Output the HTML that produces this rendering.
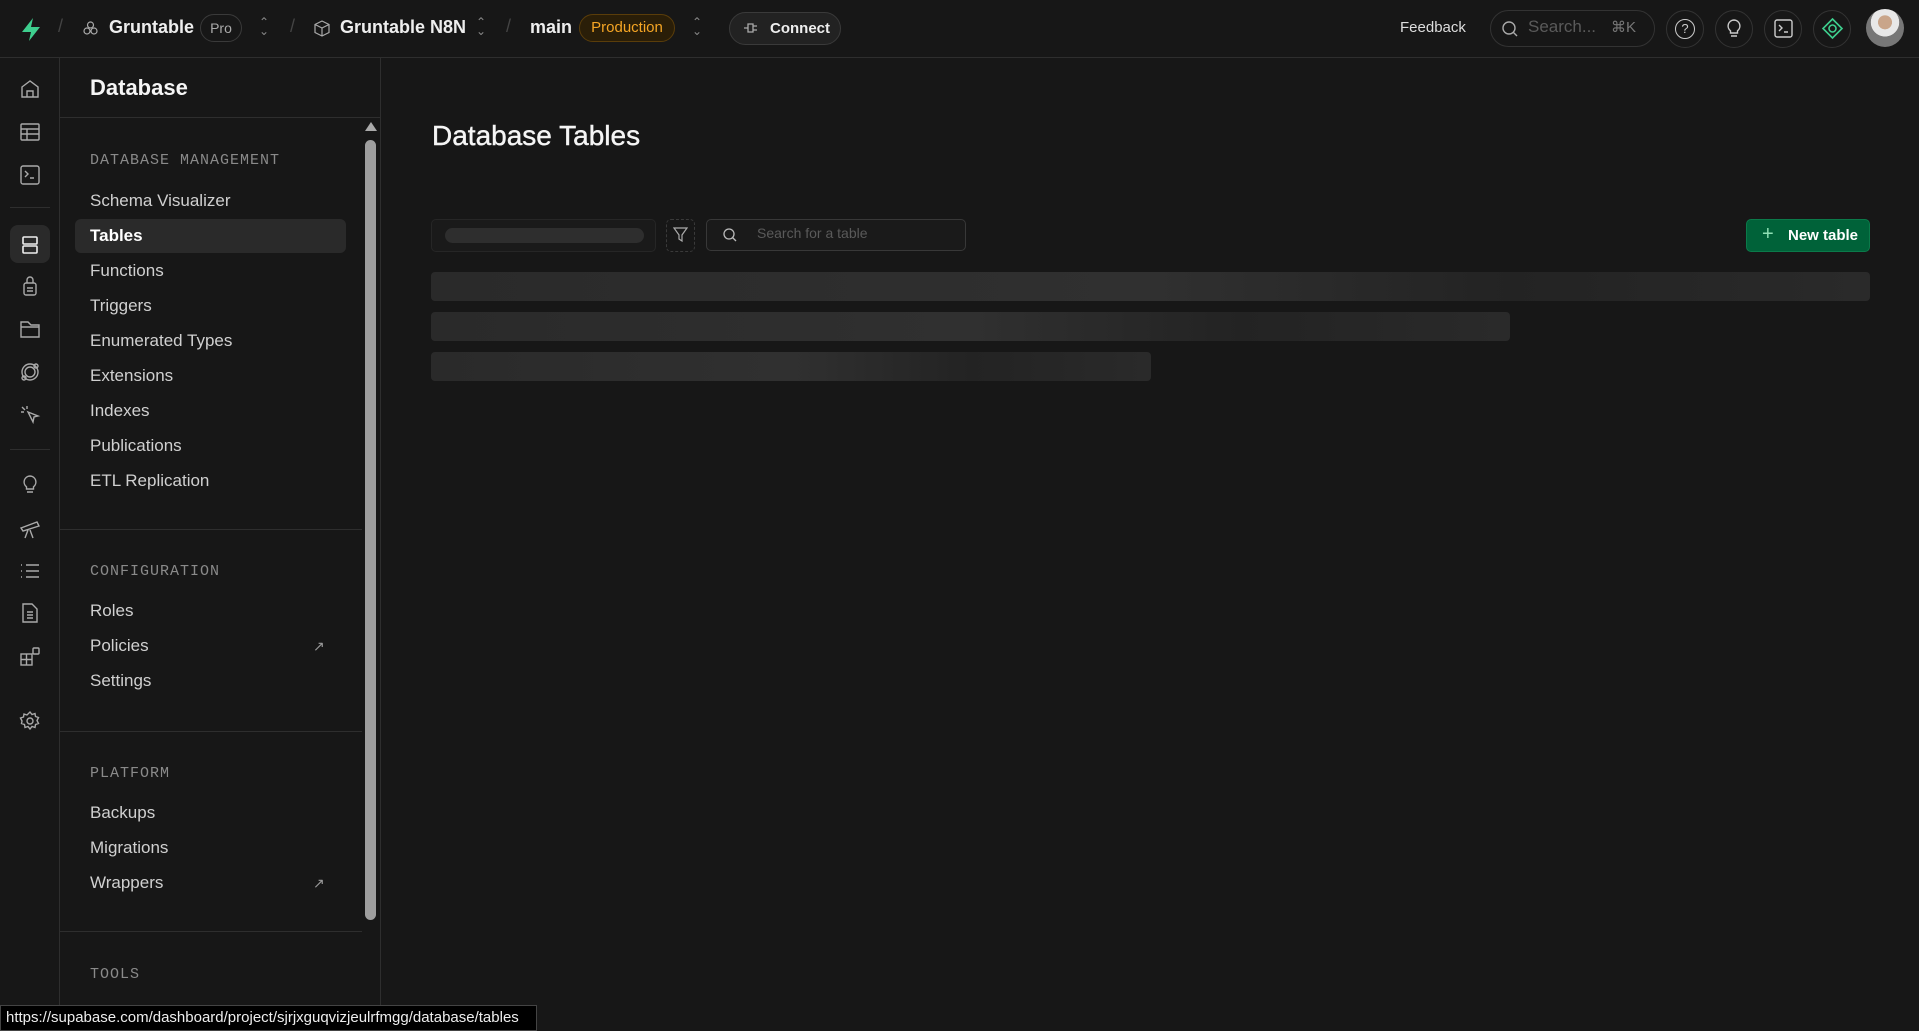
<!DOCTYPE html>
<html><head><meta charset="utf-8"><style>
*{box-sizing:border-box;margin:0;padding:0}
body{width:1919px;height:1031px;background:#171717;font-family:"Liberation Sans",sans-serif;color:#ededed;position:relative;overflow:hidden}
.a{position:absolute}
.top{left:0;top:0;width:1919px;height:58px;border-bottom:1px solid #2e2e2e}
.rail{left:0;top:58px;width:60px;height:973px;border-right:1px solid #2e2e2e}
.side{left:60px;top:58px;width:321px;height:973px;border-right:1px solid #2e2e2e}
.ico{position:absolute;left:19px;width:22px;height:22px}
.item{position:absolute;left:90px;font-size:17px;color:#d0d0d0}
.sec{position:absolute;left:90px;font-family:"Liberation Mono",monospace;font-size:15px;color:#8a8a8a;letter-spacing:1px}
.div{position:absolute;left:60px;width:302px;height:1px;background:#2e2e2e}
.ext{position:absolute;left:313px;color:#999;font-size:14px}
.circ{position:absolute;top:10px;width:38px;height:38px;border:1px solid #333;border-radius:50%}
.sk{position:absolute;left:431px;height:29px;border-radius:4px;background:linear-gradient(90deg,#2a2a2a,#303030 50%,#232323 75%,#2a2a2a)}
.chev{position:absolute;top:18px;color:#888;font-size:12px;line-height:9px}
</style></head><body>
<div class="a top">
  <svg class="a" style="left:19px;top:17px" width="24" height="25" viewBox="0 0 24 25"><path d="M14 1 L3 15 H12 L10 24 L21 10 H12 Z" fill="#3ecf8e"/></svg>
  <div class="a" style="left:58px;top:16px;color:#444;font-size:18px">/</div>
  <svg class="a" style="left:82px;top:20px" width="17" height="17" viewBox="0 0 17 17" fill="none" stroke="#aaa" stroke-width="1.2"><circle cx="8.5" cy="5" r="3"/><circle cx="5" cy="11" r="3"/><circle cx="12" cy="11" r="3"/></svg>
  <div class="a" style="left:109px;top:17px;font-size:18px;font-weight:bold;color:#eee">Gruntable</div>
  <div class="a" style="left:200px;top:14px;width:42px;height:28px;border:1px solid #3a3a3a;border-radius:14px;font-size:14px;color:#aaa;text-align:center;line-height:26px">Pro</div>
  <div class="chev" style="left:259px">⌃<br>⌄</div>
  <div class="a" style="left:290px;top:16px;color:#444;font-size:18px">/</div>
  <svg class="a" style="left:314px;top:20px" width="16" height="17" viewBox="0 0 16 17" fill="none" stroke="#aaa" stroke-width="1.2"><path d="M8 1 L15 4.5 V12.5 L8 16 L1 12.5 V4.5 Z M1 4.5 L8 8 L15 4.5 M8 8 V16"/></svg>
  <div class="a" style="left:340px;top:17px;font-size:18px;font-weight:bold;color:#eee">Gruntable N8N</div>
  <div class="chev" style="left:476px">⌃<br>⌄</div>
  <div class="a" style="left:506px;top:16px;color:#444;font-size:18px">/</div>
  <div class="a" style="left:530px;top:17px;font-size:18px;font-weight:bold;color:#eee">main</div>
  <div class="a" style="left:579px;top:14px;width:96px;height:28px;border:1px solid #5a3d0a;background:#2a1e08;border-radius:14px;font-size:15px;color:#f5a524;text-align:center;line-height:26px">Production</div>
  <div class="chev" style="left:692px">⌃<br>⌄</div>
  <div class="a" style="left:729px;top:12px;width:112px;height:33px;border:1px solid #3a3a3a;background:#222;border-radius:17px;font-size:15px;font-weight:bold;color:#eee;line-height:31px;padding-left:40px">Connect</div>
  <svg class="a" style="left:743px;top:21px" width="16" height="14" viewBox="0 0 16 14" fill="none" stroke="#aaa" stroke-width="1.3"><path d="M1 7H5 M5 3H10V11H5Z M10 5H14 M10 9H14"/></svg>
  <div class="a" style="left:1400px;top:19px;font-size:15px;color:#ddd">Feedback</div>
  <div class="a" style="left:1490px;top:10px;width:165px;height:37px;border:1px solid #333;border-radius:19px"></div>
  <svg class="a" style="left:1501px;top:20px" width="18" height="18" viewBox="0 0 18 18" fill="none" stroke="#aaa" stroke-width="1.4"><circle cx="8" cy="8" r="6"/><path d="M12.5 12.5L16 16"/></svg>
  <div class="a" style="left:1528px;top:17px;font-size:17px;color:#5a5a5a">Search...</div>
  <div class="a" style="left:1611px;top:18px;font-size:15px;color:#777">⌘K</div>
  <div class="circ" style="left:1666px"></div><div class="a" style="left:1675px;top:19px;width:20px;height:20px;border:1.5px solid #ccc;border-radius:50%;font-size:13px;text-align:center;line-height:17px;color:#ccc">?</div>
  <div class="circ" style="left:1715px"></div>
  <svg class="a" style="left:1725px;top:18px" width="18" height="22" viewBox="0 0 18 22" fill="none" stroke="#ccc" stroke-width="1.4"><path d="M9 2a6 6 0 0 0-3.5 10.8V15h7v-2.2A6 6 0 0 0 9 2ZM6 18h6"/></svg>
  <div class="circ" style="left:1764px"></div>
  <svg class="a" style="left:1774px;top:19px" width="19" height="19" viewBox="0 0 19 19" fill="none" stroke="#ccc" stroke-width="1.4"><rect x="1" y="1" width="17" height="17" rx="2"/><path d="M5 6l3 3-3 3M10 13h4"/></svg>
  <div class="circ" style="left:1813px"></div>
  <svg class="a" style="left:1821px;top:17px" width="23" height="23" viewBox="0 0 23 23" fill="none" stroke="#3ecf8e" stroke-width="1.6"><path d="M11.5 2L21 11.5 11.5 21 2 11.5Z"/><circle cx="11.5" cy="11.5" r="3.5"/></svg>
  <div class="a" style="left:1866px;top:9px;width:38px;height:38px;border-radius:50%;background:radial-gradient(circle at 50% 35%,#c9a58a 0 22%,#e8e8e8 23% 45%,#777 46%)"></div>
</div>

<div class="a rail">
  <svg class="ico" style="top:20px" viewBox="0 0 22 22" fill="none" stroke="#aaa" stroke-width="1.4"><path d="M3 9l8-6 8 6v10H3Z M8 19v-6h6v6"/></svg>
  <svg class="ico" style="top:63px" viewBox="0 0 22 22" fill="none" stroke="#aaa" stroke-width="1.4"><rect x="2" y="3" width="18" height="16" rx="1"/><path d="M2 8h18M2 13h18M8 8v11"/></svg>
  <svg class="ico" style="top:106px" viewBox="0 0 22 22" fill="none" stroke="#aaa" stroke-width="1.4"><rect x="2" y="2" width="18" height="18" rx="2"/><path d="M6 7l3 3-3 3M11 14h4"/></svg>
  <div class="a" style="left:10px;top:149px;width:40px;height:1px;background:#2e2e2e"></div>
  <div class="a" style="left:10px;top:167px;width:40px;height:38px;background:#2a2a2a;border-radius:8px"></div>
  <svg class="ico" style="top:176px" viewBox="0 0 22 22" fill="none" stroke="#eee" stroke-width="1.6"><rect x="4" y="3" width="14" height="7" rx="1"/><rect x="4" y="12" width="14" height="7" rx="1"/></svg>
  <svg class="ico" style="top:217px" viewBox="0 0 22 22" fill="none" stroke="#aaa" stroke-width="1.4"><path d="M8 8V5a3 3 0 0 1 6 0v3"/><rect x="5" y="8" width="12" height="12" rx="2"/><path d="M8 13h6M8 16h6"/></svg>
  <svg class="ico" style="top:260px" viewBox="0 0 22 22" fill="none" stroke="#aaa" stroke-width="1.4"><path d="M2 7V4h7l3 3h8v12H2Z M2 9h18"/></svg>
  <svg class="ico" style="top:303px" viewBox="0 0 22 22" fill="none" stroke="#aaa" stroke-width="1.4"><circle cx="11" cy="11" r="8"/><circle cx="11" cy="11" r="5"/><circle cx="17" cy="5" r="2"/><circle cx="5" cy="17" r="2"/></svg>
  <svg class="ico" style="top:346px" viewBox="0 0 22 22" fill="none" stroke="#aaa" stroke-width="1.4"><path d="M9 8l10 4-4 1-1 5Z M3 3l3 3M2 8h3M8 2v3"/></svg>
  <div class="a" style="left:10px;top:391px;width:40px;height:1px;background:#2e2e2e"></div>
  <svg class="ico" style="top:416px" viewBox="0 0 22 22" fill="none" stroke="#aaa" stroke-width="1.4"><path d="M11 2a6 6 0 0 0-3.5 10.8V15h7v-2.2A6 6 0 0 0 11 2ZM8 18h6"/></svg>
  <svg class="ico" style="top:460px" viewBox="0 0 22 22" fill="none" stroke="#aaa" stroke-width="1.4"><path d="M2 10l16-6 2 4-16 5Z M9 12l-3 8M11 12l3 8"/></svg>
  <svg class="ico" style="top:502px" viewBox="0 0 22 22" fill="none" stroke="#aaa" stroke-width="1.4"><path d="M7 5h13M7 11h13M7 17h13M2 5h1M2 11h1M2 17h1"/></svg>
  <svg class="ico" style="top:544px" viewBox="0 0 22 22" fill="none" stroke="#aaa" stroke-width="1.4"><path d="M4 2h9l5 5v13H4Z M8 10h6M8 13h6M8 16h6"/></svg>
  <svg class="ico" style="top:587px" viewBox="0 0 22 22" fill="none" stroke="#aaa" stroke-width="1.4"><rect x="2" y="9" width="11" height="11"/><path d="M2 14.5h11M7.5 9v11"/><rect x="14" y="3" width="6" height="6" rx="1"/></svg>
  <svg class="ico" style="top:652px" viewBox="0 0 22 22" fill="none" stroke="#aaa" stroke-width="1.4"><circle cx="11" cy="11" r="3"/><path d="M11 2l2 2.5 3-1 .5 3 3 1-1.5 3 1.5 3-3 1-.5 3-3-1-2 2.5-2-2.5-3 1-.5-3-3-1L3 11 1.5 8l3-1 .5-3 3 1Z"/></svg>
</div>

<div class="a side">
  <div class="a" style="left:30px;top:17px;font-size:22px;font-weight:bold;color:#f5f5f5">Database</div>
  <div class="a" style="left:0;top:59px;width:321px;height:1px;background:#2e2e2e"></div>
  <div class="a" style="left:302px;top:60px;width:18px;height:913px;background:#171717"></div>
  <div class="a" style="left:305px;top:64px;width:0;height:0;border-left:6px solid transparent;border-right:6px solid transparent;border-bottom:9px solid #aaa"></div>
  <div class="a" style="left:305px;top:82px;width:11px;height:780px;background:#9e9e9e;border-radius:6px"></div>
</div>
<div class="a" style="left:75px;top:219px;width:271px;height:34px;background:#2a2a2a;border-radius:6px"></div>
<div class="sec" style="top:152px">DATABASE MANAGEMENT</div>
<div class="item" style="top:191px">Schema Visualizer</div>
<div class="item" style="top:226px;color:#fff;font-weight:bold">Tables</div>
<div class="item" style="top:261px">Functions</div>
<div class="item" style="top:296px">Triggers</div>
<div class="item" style="top:331px">Enumerated Types</div>
<div class="item" style="top:366px">Extensions</div>
<div class="item" style="top:401px">Indexes</div>
<div class="item" style="top:436px">Publications</div>
<div class="item" style="top:471px">ETL Replication</div>
<div class="div" style="top:529px"></div>
<div class="sec" style="top:563px">CONFIGURATION</div>
<div class="item" style="top:601px">Roles</div>
<div class="item" style="top:636px">Policies</div><div class="ext" style="top:638px">↗</div>
<div class="item" style="top:671px">Settings</div>
<div class="div" style="top:731px"></div>
<div class="sec" style="top:765px">PLATFORM</div>
<div class="item" style="top:803px">Backups</div>
<div class="item" style="top:838px">Migrations</div>
<div class="item" style="top:873px">Wrappers</div><div class="ext" style="top:875px">↗</div>
<div class="div" style="top:931px"></div>
<div class="sec" style="top:966px">TOOLS</div>

<div class="a" style="left:432px;top:120px;font-size:28px;color:#f5f5f5;-webkit-text-stroke:0.4px #f5f5f5">Database Tables</div>
<div class="a" style="left:431px;top:219px;width:225px;height:33px;border:1px solid #262626;border-radius:5px;background:#1a1a1a"></div>
<div class="a" style="left:445px;top:228px;width:199px;height:15px;border-radius:8px;background:#2e2e2e"></div>
<div class="a" style="left:666px;top:219px;width:29px;height:33px;border:1px dashed #3a3a3a;border-radius:5px"></div>
<svg class="a" style="left:673px;top:227px" width="15" height="16" viewBox="0 0 15 16" fill="none" stroke="#aaa" stroke-width="1.2"><path d="M1 1h13L9 8v6l-3-2V8Z"/></svg>
<div class="a" style="left:706px;top:219px;width:260px;height:32px;border:1px solid #383838;border-radius:5px;background:#1a1a1a"></div>
<svg class="a" style="left:722px;top:227px" width="16" height="16" viewBox="0 0 16 16" fill="none" stroke="#bbb" stroke-width="1.3"><circle cx="7" cy="7" r="5"/><path d="M10.5 10.5L14 14"/></svg>
<div class="a" style="left:757px;top:225px;font-size:14px;color:#5a5a5a">Search for a table</div>
<div class="a" style="left:1746px;top:219px;width:124px;height:33px;background:#006239;border:1px solid #0b7a4a;border-radius:5px;font-size:15px;font-weight:bold;color:#fff;line-height:31px;padding-left:41px">New table</div>
<div class="a" style="left:1762px;top:223px;font-size:20px;color:#8fe0b5">+</div>
<div class="sk" style="top:272px;width:1439px"></div>
<div class="sk" style="top:312px;width:1079px"></div>
<div class="sk" style="top:352px;width:720px"></div>

<div class="a" style="left:0;top:1005px;width:537px;height:26px;background:#000;border:1px solid #444;font-size:15px;color:#eee;line-height:24px;padding-left:5px;white-space:nowrap;overflow:hidden">https://supabase.com/dashboard/project/sjrjxguqvizjeulrfmgg/database/tables</div>
</body></html>
